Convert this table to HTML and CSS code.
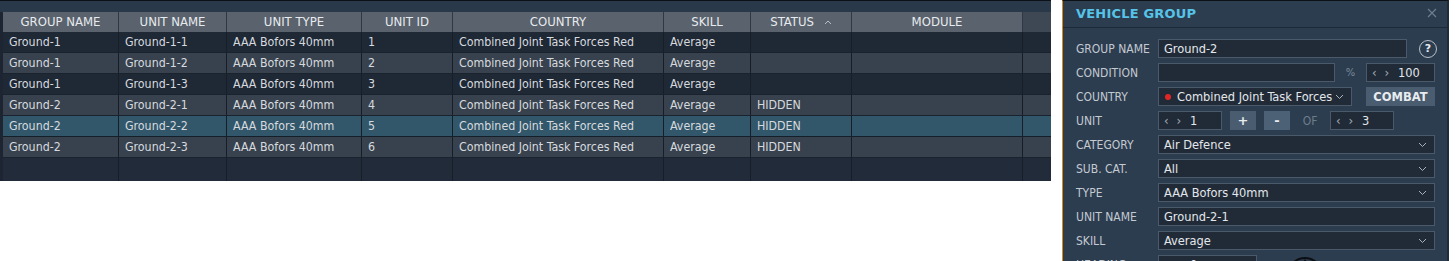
FILE: index.html
```html
<!DOCTYPE html>
<html>
<head>
<meta charset="utf-8">
<link rel="stylesheet" href="styles.css">
</head>
<body>
<div class="page">
  <section class="left">
    <div class="topstrip"></div>
    <div class="tablewrap">
      <div class="grid">
        <div class="hc">GROUP NAME</div>
        <div class="hc">UNIT NAME</div>
        <div class="hc">UNIT TYPE</div>
        <div class="hc">UNIT ID</div>
        <div class="hc">COUNTRY</div>
        <div class="hc">SKILL</div>
        <div class="hc sort">STATUS <svg class="caret" width="8" height="6" viewBox="0 0 8 6"><path d="M1 5 L4 2 L7 5" fill="none" stroke="#b8bfc6" stroke-width="1"/></svg></div>
        <div class="hc">MODULE</div>
        <div class="hc filler"></div>

        <div class="r d"><span>Ground-1</span><span>Ground-1-1</span><span>AAA Bofors 40mm</span><span>1</span><span>Combined Joint Task Forces Red</span><span>Average</span><span></span><span></span><span></span></div>
        <div class="r l"><span>Ground-1</span><span>Ground-1-2</span><span>AAA Bofors 40mm</span><span>2</span><span>Combined Joint Task Forces Red</span><span>Average</span><span></span><span></span><span></span></div>
        <div class="r d"><span>Ground-1</span><span>Ground-1-3</span><span>AAA Bofors 40mm</span><span>3</span><span>Combined Joint Task Forces Red</span><span>Average</span><span></span><span></span><span></span></div>
        <div class="r l"><span>Ground-2</span><span>Ground-2-1</span><span>AAA Bofors 40mm</span><span>4</span><span>Combined Joint Task Forces Red</span><span>Average</span><span>HIDDEN</span><span></span><span></span></div>
        <div class="r s"><span>Ground-2</span><span>Ground-2-2</span><span>AAA Bofors 40mm</span><span>5</span><span>Combined Joint Task Forces Red</span><span>Average</span><span>HIDDEN</span><span></span><span></span></div>
        <div class="r l"><span>Ground-2</span><span>Ground-2-3</span><span>AAA Bofors 40mm</span><span>6</span><span>Combined Joint Task Forces Red</span><span>Average</span><span>HIDDEN</span><span></span><span></span></div>
        <div class="r e"><span></span><span></span><span></span><span></span><span></span><span></span><span></span><span></span><span></span></div>
      </div>
    </div>
  </section>

  <aside class="panel">
    <header class="ptitle">
      <span class="ttext">VEHICLE GROUP</span>
      <svg class="close" width="10" height="10" viewBox="0 0 10 10"><path d="M1 1 L9 9 M9 1 L1 9" stroke="#6f7f8f" stroke-width="1.1" fill="none"/></svg>
    </header>
    <div class="form">
      <div class="frow">
        <label>GROUP NAME</label>
        <div class="inp w249">Ground-2</div>
        <span class="help">?</span>
      </div>
      <div class="frow">
        <label>CONDITION</label>
        <div class="inp w177"></div>
        <span class="pct">%</span>
        <div class="inp w69 spin"><span class="arr">&lsaquo; &rsaquo;</span>100</div>
      </div>
      <div class="frow">
        <label>COUNTRY</label>
        <div class="inp sel w194"><span class="dot"></span>Combined Joint Task Forces<svg class="chev" width="9" height="6" viewBox="0 0 9 6"><path d="M1 1 L4.5 4.5 L8 1" fill="none" stroke="#aab3bc" stroke-width="1"/></svg></div>
        <span class="btn combat">COMBAT</span>
      </div>
      <div class="frow">
        <label>UNIT</label>
        <div class="inp w64 spin"><span class="arr">&lsaquo; &rsaquo;</span>1</div>
        <span class="btn pm plus">+</span>
        <span class="btn pm minus">-</span>
        <span class="of">OF</span>
        <div class="inp w64 spin"><span class="arr">&lsaquo; &rsaquo;</span>3</div>
      </div>
      <div class="frow">
        <label>CATEGORY</label>
        <div class="inp sel w277">Air Defence<svg class="chev" width="9" height="6" viewBox="0 0 9 6"><path d="M1 1 L4.5 4.5 L8 1" fill="none" stroke="#aab3bc" stroke-width="1"/></svg></div>
      </div>
      <div class="frow">
        <label>SUB. CAT.</label>
        <div class="inp sel w277">All<svg class="chev" width="9" height="6" viewBox="0 0 9 6"><path d="M1 1 L4.5 4.5 L8 1" fill="none" stroke="#aab3bc" stroke-width="1"/></svg></div>
      </div>
      <div class="frow">
        <label>TYPE</label>
        <div class="inp sel w277">AAA Bofors 40mm<svg class="chev" width="9" height="6" viewBox="0 0 9 6"><path d="M1 1 L4.5 4.5 L8 1" fill="none" stroke="#aab3bc" stroke-width="1"/></svg></div>
      </div>
      <div class="frow">
        <label>UNIT NAME</label>
        <div class="inp w277">Ground-2-1</div>
      </div>
      <div class="frow">
        <label>SKILL</label>
        <div class="inp sel w277">Average<svg class="chev" width="9" height="6" viewBox="0 0 9 6"><path d="M1 1 L4.5 4.5 L8 1" fill="none" stroke="#aab3bc" stroke-width="1"/></svg></div>
      </div>
      <div class="frow">
        <label>HEADING</label>
        <div class="inp w99 spin"><span class="arr">&lsaquo; &rsaquo;</span>0</div>
        <svg class="compass" width="40" height="40" viewBox="0 0 40 40"><circle cx="20" cy="20" r="17" fill="none" stroke="#0b0f14" stroke-width="2"/><path d="M20 4 L15 11 L25 11 Z" fill="#0b0f14"/><path d="M20 10 L20 20" stroke="#0b0f14" stroke-width="2"/></svg>
      </div>
    </div>
  </aside>
</div>
</body>
</html>
```

FILE: styles.css
```css
* { box-sizing: border-box; }
html, body { margin: 0; padding: 0; background: #ffffff; }
body {
  font-family: "DejaVu Sans Condensed", "DejaVu Sans", sans-serif;
  font-size: 12px;
  width: 1455px;
  height: 261px;
  overflow: hidden;
}
.page {
  display: flex;
  align-items: flex-start;
}
.left {
  width: 1051px;
  flex: none;
  background: #2a3949;
}
.topstrip {
  height: 12px;
  border-top: 1px solid #0c1118;
}
.tablewrap {
  padding-left: 3px;
  background: #1c2531;
}
.grid {
  display: grid;
  grid-template-columns: 116px 108px 135px 91px 211px 87px 101px 171px 28px;
}
.hc {
  height: 20px;
  background: #59626d;
  color: #e8ebee;
  text-align: center;
  font-size: 13px;
  line-height: 20px;
  border-right: 1px solid #2f3843;
  white-space: nowrap;
}
.hc.filler { background: #3e4854; border-right: none; }
.caret { margin-left: 6px; vertical-align: 1px; }
.r { display: contents; }
.r span {
  height: 21px;
  line-height: 20px;
  padding-left: 6px;
  font-size: 12.3px;
  color: #d6dadf;
  border-right: 1px solid #161e28;
  border-bottom: 1px solid #1a222d;
  white-space: nowrap;
  overflow: hidden;
}
.r span:last-child { border-right: none; }
.r.d span { background: #1f2835; }
.r.l span { background: #38424e; }
.r.s span { background: #32576a; border-bottom-color: #142029; }
.r.e span { background: #212b3a; height: 23px; border-bottom: none; }

.panel {
  margin-left: 11px;
  width: 387px;
  height: 261px;
  flex: none;
  background: #2c3d50;
  border-left: 1px solid #d88a12;
  border-right: 2px solid #1f2c3a;
  border-top: 1px solid #0c1118;
}
.ptitle {
  height: 27px;
  border-bottom: 1px solid #1d2937;
  display: flex;
  align-items: center;
  justify-content: space-between;
  padding: 0 10px 2px 13px;
}
.ttext {
  color: #56c4e8;
  font-weight: bold;
  font-size: 13px;
  letter-spacing: 0.2px;
  font-family: "DejaVu Sans", sans-serif;
}
.close { flex: none; }
.form {
  padding: 11px 0 0 13px;
  display: flex;
  flex-direction: column;
  gap: 5px;
}
.frow {
  display: flex;
  align-items: center;
  height: 19px;
}
.frow label {
  width: 82px;
  flex: none;
  color: #c4cad0;
  font-size: 12px;
  white-space: nowrap;
}
.inp {
  height: 19px;
  background: #212b38;
  border: 1px solid #4a5a6b;
  color: #e3e7eb;
  font-size: 12.7px;
  line-height: 17px;
  padding-left: 5px;
  white-space: nowrap;
  display: flex;
  align-items: center;
  flex: none;
}
.w249 { width: 249px; }
.w177 { width: 177px; }
.w69 { width: 69px; }
.w194 { width: 194px; }
.w64 { width: 64px; }
.w277 { width: 277px; }
.w99 { width: 99px; }
.chev { margin-left: auto; margin-right: 7px; flex: none; }
.arr { color: #a4adb6; margin-right: 7px; font-size: 13px; letter-spacing: 2px; }
.help {
  margin-left: 12px;
  width: 18px;
  height: 18px;
  border-radius: 50%;
  border: 1.5px solid #b9c1c9;
  color: #e6eaee;
  font-weight: bold;
  font-size: 11px;
  display: flex;
  align-items: center;
  justify-content: center;
  font-family: "DejaVu Sans", sans-serif;
}
.pct {
  width: 31px;
  text-align: center;
  color: #7b8a98;
  font-size: 11px;
}
.dot {
  width: 6px;
  height: 6px;
  border-radius: 50%;
  background: #e32525;
  margin: 0 6px 0 1px;
  flex: none;
}
.btn {
  height: 19px;
  background: #4a5c70;
  color: #e8ecef;
  font-weight: bold;
  display: flex;
  align-items: center;
  justify-content: center;
  flex: none;
  font-family: "DejaVu Sans", sans-serif;
}
.combat { width: 69px; margin-left: 14px; font-size: 11.5px; }
.pm { width: 26px; font-size: 13px; }
.plus { margin-left: 8px; }
.minus { margin-left: 8px; background: #4d6176; }
.of {
  width: 40px;
  text-align: center;
  color: #6d7c8b;
}
.compass { margin-left: 28px; margin-top: 20px; flex: none; }
```
